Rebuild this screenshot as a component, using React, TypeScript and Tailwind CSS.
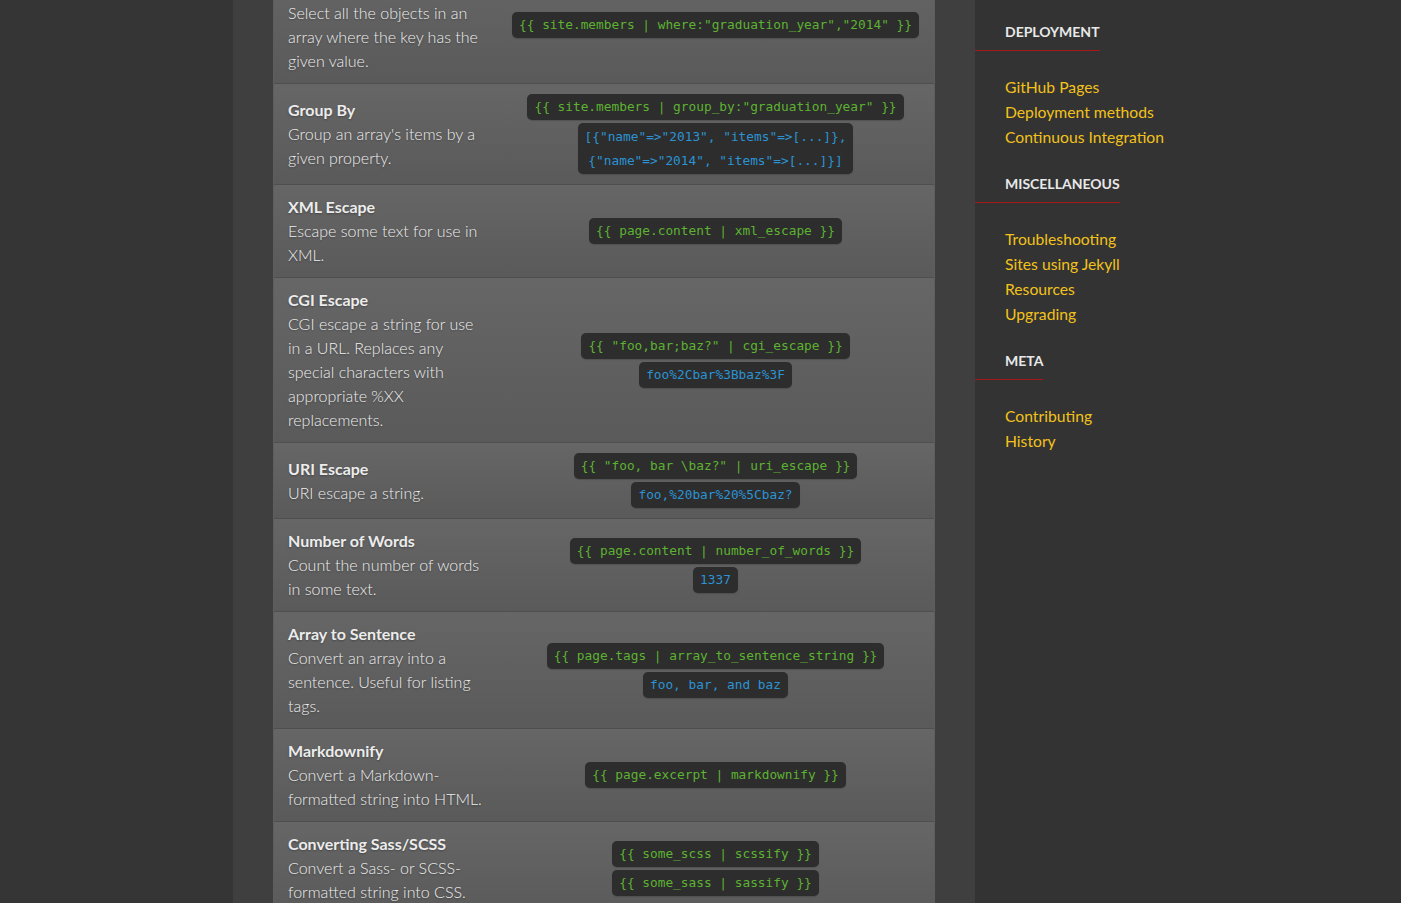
import React from 'react';

type Snippet = { text: React.ReactNode; kind: 'in' | 'out'; multiline?: boolean };

interface FilterRow {
  title: string;
  description: string;
  snippets: Snippet[];
}

const rows: FilterRow[] = [
  {
    title: 'Where',
    description: 'Select all the objects in an array where the key has the given value.',
    snippets: [{ text: '{{ site.members | where:"graduation_year","2014" }}', kind: 'in' }],
  },
  {
    title: 'Group By',
    description: "Group an array's items by a given property.",
    snippets: [
      { text: '{{ site.members | group_by:"graduation_year" }}', kind: 'in' },
      {
        text: (
          <>
            {'[{"name"=>"2013", "items"=>[...]},'}
            <br />
            {'{"name"=>"2014", "items"=>[...]}]'}
          </>
        ),
        kind: 'out',
        multiline: true,
      },
    ],
  },
  {
    title: 'XML Escape',
    description: 'Escape some text for use in XML.',
    snippets: [{ text: '{{ page.content | xml_escape }}', kind: 'in' }],
  },
  {
    title: 'CGI Escape',
    description:
      'CGI escape a string for use in a URL. Replaces any special characters with appropriate %XX replacements.',
    snippets: [
      { text: '{{ "foo,bar;baz?" | cgi_escape }}', kind: 'in' },
      { text: 'foo%2Cbar%3Bbaz%3F', kind: 'out' },
    ],
  },
  {
    title: 'URI Escape',
    description: 'URI escape a string.',
    snippets: [
      { text: '{{ "foo, bar \\baz?" | uri_escape }}', kind: 'in' },
      { text: 'foo,%20bar%20%5Cbaz?', kind: 'out' },
    ],
  },
  {
    title: 'Number of Words',
    description: 'Count the number of words in some text.',
    snippets: [
      { text: '{{ page.content | number_of_words }}', kind: 'in' },
      { text: '1337', kind: 'out' },
    ],
  },
  {
    title: 'Array to Sentence',
    description: 'Convert an array into a sentence. Useful for listing tags.',
    snippets: [
      { text: '{{ page.tags | array_to_sentence_string }}', kind: 'in' },
      { text: 'foo, bar, and baz', kind: 'out' },
    ],
  },
  {
    title: 'Markdownify',
    description: 'Convert a Markdown-formatted string into HTML.',
    snippets: [{ text: '{{ page.excerpt | markdownify }}', kind: 'in' }],
  },
  {
    title: 'Converting Sass/SCSS',
    description: 'Convert a Sass- or SCSS-formatted string into CSS.',
    snippets: [
      { text: '{{ some_scss | scssify }}', kind: 'in' },
      { text: '{{ some_sass | sassify }}', kind: 'in' },
    ],
  },
];

const sections = [
  { name: 'Deployment', links: ['GitHub Pages', 'Deployment methods', 'Continuous Integration'] },
  { name: 'Miscellaneous', links: ['Troubleshooting', 'Sites using Jekyll', 'Resources', 'Upgrading'] },
  { name: 'Meta', links: ['Contributing', 'History'] },
];

const CodeBox = ({ snippet }: { snippet: Snippet }) => (
  <code
    className={`inline-block whitespace-nowrap rounded-[5px] bg-[#2d2d2d] px-[7px] text-center font-['DejaVu_Sans_Mono',monospace] text-[12.8px] leading-[24px] shadow-[0_1px_1px_rgba(0,0,0,0.15)] ${
      snippet.multiline ? 'py-[1.5px]' : 'py-[1px]'
    } ${snippet.kind === 'in' ? 'text-[#5db232]' : 'text-[#2b93d4]'}`}
  >
    {snippet.text}
  </code>
);

export default function App() {
  return (
    <div className="flex h-[903px] overflow-hidden bg-[#333333] font-['Lato',sans-serif]">
      <div className="w-[233px] shrink-0 bg-[#353535]" />

      {/* Main article */}
      <main className="w-[742px] shrink-0 bg-[#3f3f3f] px-[40px]">
        <div className="-mt-[34px] border-x border-[#5e5e5e] [text-shadow:0_1px_2px_rgba(0,0,0,0.3)]">
          {rows.map((row) => (
            <div
              key={row.title}
              className="grid grid-cols-[223px_1fr] items-center border-t border-[#4f4f4f] bg-linear-to-b from-[#666666] to-[#5a5a5a]"
            >
              <div className="px-[14px] py-[10px] text-[16px] leading-[24px] text-[#eeeeee]">
                <p className="font-bold text-[#ececec]">{row.title}</p>
                <p className="font-light">{row.description}</p>
              </div>
              <div className="flex flex-col items-center gap-[3px] py-[10px] [text-shadow:none]">
                {row.snippets.map((s, i) => (
                  <CodeBox key={i} snippet={s} />
                ))}
              </div>
            </div>
          ))}
        </div>
      </main>

      {/* Sidebar */}
      <aside className="flex-1 bg-[#333333] pt-[19px]">
        {sections.map((section, index) => (
          <div key={section.name} className={index > 0 ? 'mt-[21px]' : ''}>
            <h4 className="inline-block border-b border-[#a8181a] pb-[8px] pl-[30px] text-[14px] font-bold uppercase leading-[20px] text-[#e8e8e8]">
              {section.name}
            </h4>
            <ul className="mt-[24px] pl-[30px]">
              {section.links.map((link) => (
                <li key={link} className="text-[15.7px] leading-[25px] text-[#f2c21b]">
                  {link}
                </li>
              ))}
            </ul>
          </div>
        ))}
      </aside>
    </div>
  );
}
